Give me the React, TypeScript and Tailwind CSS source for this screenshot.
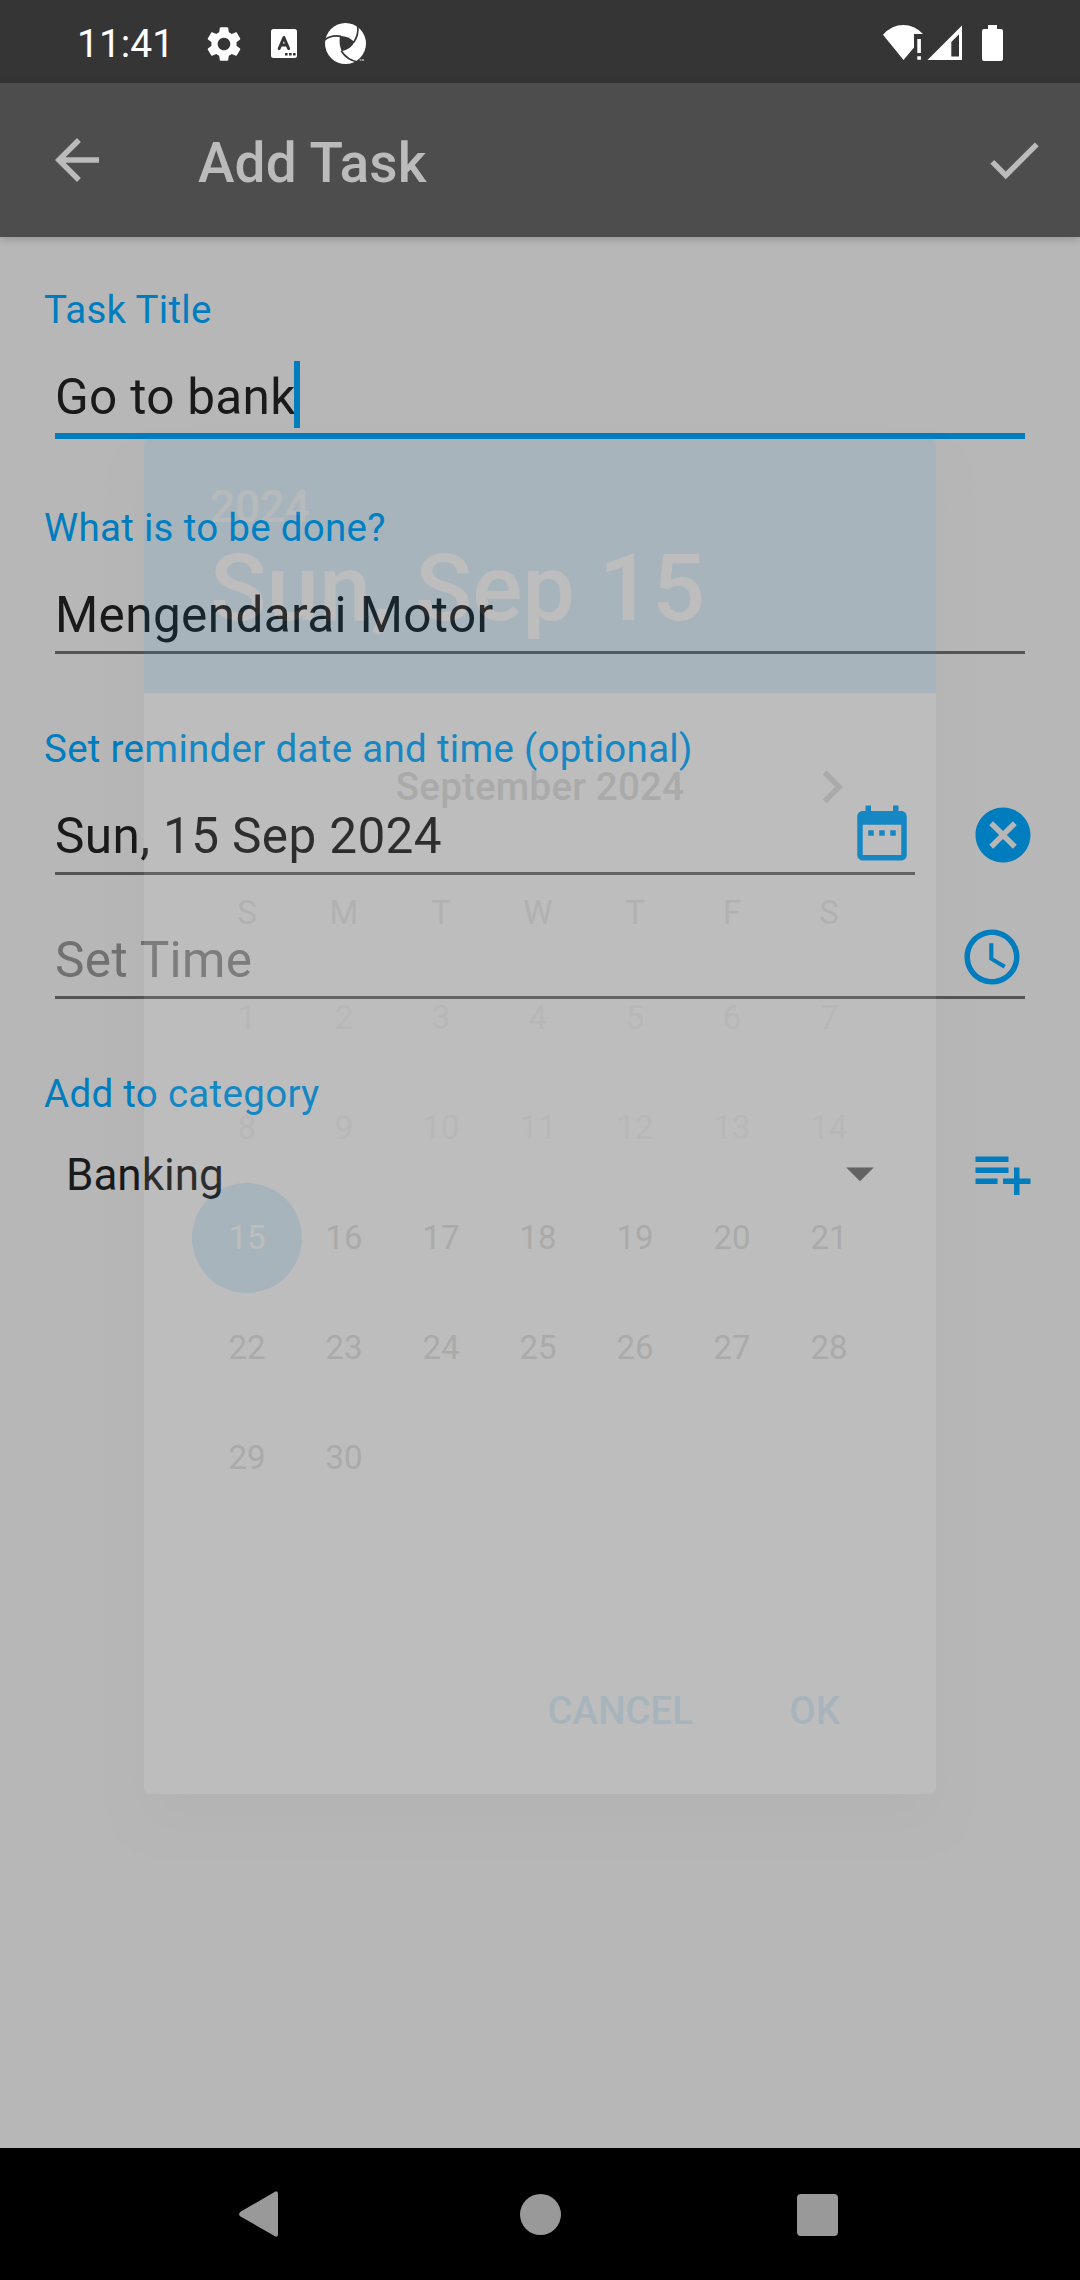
import React from "react";

type IconProps = { d: string; className: string };

function Icon({ d, className }: IconProps) {
  return (
    <svg viewBox="0 0 24 24" className={className} fill="currentColor" aria-hidden="true">
      <path d={d} />
    </svg>
  );
}

const ICONS = {
  gear: "M19.14 12.94c.04-.3.06-.61.06-.94 0-.32-.02-.64-.07-.94l2.03-1.58c.18-.14.23-.41.12-.61l-1.92-3.32c-.12-.22-.37-.29-.59-.22l-2.39.96c-.5-.38-1.03-.7-1.62-.94l-.36-2.54c-.04-.24-.24-.41-.48-.41h-3.84c-.24 0-.43.17-.47.41l-.36 2.54c-.59.24-1.13.57-1.62.94l-2.39-.96c-.22-.08-.47 0-.59.22L2.74 8.87c-.12.21-.08.47.12.61l2.03 1.58c-.05.3-.09.63-.09.94s.02.64.07.94l-2.03 1.58c-.18.14-.23.41-.12.61l1.92 3.32c.12.22.37.29.59.22l2.39-.96c.5.38 1.03.7 1.62.94l.36 2.54c.05.24.24.41.48.41h3.84c.24 0 .44-.17.47-.41l.36-2.54c.59-.24 1.13-.56 1.62-.94l2.39.96c.22.08.47 0 .59-.22l1.92-3.32c.12-.22.07-.47-.12-.61l-2.01-1.58zM12 15.6c-1.98 0-3.6-1.62-3.6-3.6s1.62-3.6 3.6-3.6 3.6 1.62 3.6 3.6-1.62 3.6-3.6 3.6z",
  back: "M20 11H7.83l5.59-5.59L12 4l-8 8 8 8 1.41-1.41L7.83 13H20v-2z",
  done: "M9 16.2L4.8 12l-1.4 1.4L9 19 21 7l-1.4-1.4L9 16.2z",
  calendar:
    "M9 11H7v2h2v-2zm4 0h-2v2h2v-2zm4 0h-2v2h2v-2zm2-7h-1V2h-2v2H8V2H6v2H5c-1.11 0-1.99.9-1.99 2L3 20c0 1.1.89 2 2 2h14c1.1 0 2-.9 2-2V6c0-1.1-.9-2-2-2zm0 16H5V9h14v11z",
  clear:
    "M12 2C6.47 2 2 6.47 2 12s4.47 10 10 10 10-4.47 10-10S17.53 2 12 2zm5 13.59L15.59 17 12 13.41 8.41 17 7 15.59 10.59 12 7 8.41 8.41 7 12 10.59 15.59 7 17 8.41 13.41 12 17 15.59z",
  clock:
    "M11.99 2C6.47 2 2 6.48 2 12s4.47 10 9.99 10C17.52 22 22 17.52 22 12S17.52 2 11.99 2zM12 20c-4.42 0-8-3.58-8-8s3.58-8 8-8 8 3.58 8 8-3.58 8-8 8zm.5-13H11v6l5.25 3.15.75-1.23-4.5-2.67z",
  dropdown: "M7 10l5 5 5-5z",
  playlistAdd: "M14 10H2v2h12v-2zm0-4H2v2h12V6zm4 8v-4h-2v4h-4v2h4v4h2v-4h4v-2h-4zM2 16h8v-2H2v2z",
  chevron: "M10 6L8.59 7.41 13.17 12l-4.58 4.59L10 18l6-6z",
};

function StatusBar() {
  return (
    <header className="flex h-[83px] items-start bg-[#353535] pl-[77px] text-white">
      <span className="mt-[21px] w-[93px] whitespace-nowrap text-[39px] leading-[46px]">11:41</span>
      <Icon d={ICONS.gear} className="ml-[32.5px] mt-[22.5px] h-[42px] w-[42px] shrink-0" />
      <svg viewBox="0 0 26 29" className="ml-[26.5px] mt-[29px] h-[29px] w-[26px] shrink-0" aria-hidden="true">
        <rect width="26" height="29" rx="2.5" fill="#fff" />
        <path d="M8.2 19.5 L12.9 8.5 L17.6 19.5 M9.8 16 H16" fill="none" stroke="#353535" strokeWidth="3" strokeLinejoin="round" strokeLinecap="round" />
        <path d="M14 24h2.6v2.6H14zM18 24h2.6v2.6H18zM22 24h2.6v2.6H22z" fill="#353535" />
      </svg>
      <svg viewBox="0 0 123 123" className="ml-[28px] mt-[23px] h-[41px] w-[41px] shrink-0" aria-hidden="true">
        <circle cx="61.5" cy="61.5" r="61.5" fill="#fff" />
        <path d="M45 39 Q70 38 88 57 Q80 77 50 85 Q41 62 45 39z" fill="#353535" />
        <path d="M-2 52 Q18 34 48 40" fill="none" stroke="#353535" strokeWidth="5" />
        <path d="M98 6 Q102 36 86 58" fill="none" stroke="#353535" strokeWidth="5" />
        <path d="M49 84 Q66 111 98 117" fill="none" stroke="#353535" strokeWidth="5" />
        <path d="M98 123 L104 110 L123 104 V123z" fill="#353535" />
        <path d="M104 109h5v4h-5zM111 109h6v4h-6z" fill="#bbb" />
      </svg>
      <svg viewBox="0 0 120 36" className="ml-auto mr-[77px] mt-[25px] h-[36px] w-[120px] shrink-0" fill="#fff" aria-hidden="true">
        <path d="M0 9.8 Q8.5 0 20.3 0 Q31.500 0 40 9 H31 V22.500 L20.500 35z" />
        <path d="M34.300 14h3.600v14h-3.600zM34.300 31.300h3.600v3.500h-3.600z" />
        <path fillRule="evenodd" d="M79 .5 V35 H44.500z M76 9.200 L68.300 16.900 V31.500 H76z" />
        <path d="M105 0h9v4h4a2 2 0 0 1 2 2v28a2 2 0 0 1-2 2h-17a2 2 0 0 1-2-2V6a2 2 0 0 1 2-2h4z" />
      </svg>
    </header>
  );
}

function AppBar() {
  return (
    <div className="relative z-10 flex h-[154px] items-center bg-[#4d4d4d] text-[#bbbbbb] shadow-[0_2px_9px_rgba(0,0,0,0.2)]">
      <Icon d={ICONS.back} className="ml-[44px] h-[66px] w-[66px]" />
      <h1 className="ml-[88px] mt-[5px] text-[55px] font-medium leading-[64px] tracking-[0.15px]">Add Task</h1>
      <Icon d={ICONS.done} className="ml-auto mr-[33px] h-[66px] w-[66px]" />
    </div>
  );
}

function Label({ className, children }: { className: string; children: React.ReactNode }) {
  return (
    <div className={`ml-[44px] h-[45px] whitespace-nowrap text-[38.5px] leading-[45px] tracking-[0.3px] text-[#007dbf] ${className}`}>
      {children}
    </div>
  );
}

const FIELD =
  "flex h-[68px] items-start whitespace-nowrap border-b-[3px] border-[#555555] text-[49.5px] leading-[58px] tracking-[0.38px]";

function TaskForm() {
  return (
    <main className="flex h-[1911px] flex-col pt-[50px] text-[#1a1a1a]">
      <Label className="">Task Title</Label>
      <div className="mx-[55px] mt-[36px] flex h-[71px] items-start whitespace-nowrap border-b-[6px] border-[#007dbf] text-[49.5px] leading-[58px] tracking-[0.3px]">
        Go to bank
        <span className="-mt-[7px] -ml-[2px] h-[67px] w-[6px] bg-[#007dbf]" />
      </div>

      <Label className="mt-[66px]">What is to be done?</Label>
      <div className={`mx-[55px] mt-[36px] ${FIELD}`}>Mengendarai Motor</div>

      <Label className="mt-[72px]">Set reminder date and time (optional)</Label>
      <div className="mt-[36px] flex items-start pl-[55px]">
        <div className={`w-[860px] ${FIELD}`}>
          Sun, 15 Sep 2024
          <Icon d={ICONS.calendar} className="-mt-[7.500px] ml-auto mr-[0.500px] h-[66px] w-[66px] text-[#007dbf]" />
        </div>
        <Icon d={ICONS.clear} className="-mt-[5px] ml-[55px] h-[66px] w-[66px] text-[#007dbf]" />
      </div>

      <div className={`mx-[55px] mt-[56px] text-[#717171] ${FIELD}`}>
        Set Time
        <Icon d={ICONS.clock} className="-mt-[7px] ml-auto h-[66px] w-[66px] text-[#007dbf]" />
      </div>

      <Label className="mt-[72px]">Add to category</Label>
      <div className="mt-[33px] flex items-start pl-[66px] text-[44px] leading-[52px]">
        <span className="w-[761px]">Banking</span>
        <Icon d={ICONS.dropdown} className="-mt-[9.500px] h-[66px] w-[66px] text-[#555555]" />
        <Icon d={ICONS.playlistAdd} className="-mt-[9.500px] ml-[77px] h-[66px] w-[66px] text-[#007dbf]" />
      </div>
    </main>
  );
}

const WEEKDAYS = ["S", "M", "T", "W", "T", "F", "S"];
const DAYS = Array.from({ length: 30 }, (_, i) => i + 1);
const SELECTED = 15;

/* Date picker caught part-way through its fade animation. */
function DatePicker() {
  return (
    <section className="absolute left-[144px] top-[437px] z-20 flex h-[1357px] w-[792px] flex-col rounded-[6px] bg-white opacity-[0.083] shadow-[0_28px_44px_-4px_rgba(0,0,0,0.24)]">
      <div className="h-[256px] rounded-t-[6px] bg-[#009ef5] pl-[66px] pt-[44px] font-medium text-white">
        <div className="text-[44px] leading-[52px] opacity-70">2024</div>
        <div className="text-[93.5px] leading-[110px] tracking-[0.15px]">Sun, Sep 15</div>
      </div>
      <div className="relative flex h-[187px] justify-center pt-[71px] text-[38.5px] font-medium leading-[45px] tracking-[0.2px] text-[#212121]">
        September 2024
        <Icon d={ICONS.chevron} className="absolute left-[655px] top-[61px] h-[66px] w-[66px]" />
      </div>
      <div className="ml-[54.500px] grid w-[679px] grid-cols-7 text-center text-[33px] leading-[39px] text-[#757575]">
        {WEEKDAYS.map((d, i) => (
          <span key={i} className="h-[83px] pt-[12.500px]">
            {d}
          </span>
        ))}
      </div>
      <div className="ml-[54.500px] grid w-[679px] grid-cols-7 text-[33px] text-[#212121]">
        {DAYS.map((n) => (
          <span key={n} className="flex h-[110px] items-center justify-center">
            <span
              className={
                n === SELECTED
                  ? "flex h-[110px] w-[110px] shrink-0 items-center justify-center rounded-full bg-[#009ef5] text-white"
                  : n < SELECTED
                    ? "text-[#bdbdbd]"
                    : ""
              }
            >
              {n}
            </span>
          </span>
        ))}
      </div>
      <div className="mb-[61px] mr-[96px] mt-auto flex justify-end gap-[96px] text-[38.5px] font-medium leading-[45px] text-[#009ef5]">
        <span>CANCEL</span>
        <span>OK</span>
      </div>
    </section>
  );
}

function NavBar() {
  return (
    <nav className="flex h-[132px] items-center bg-black pl-[239px] text-[#999999]">
      <svg viewBox="0 0 39 46" className="h-[46px] w-[39px]" fill="currentColor" aria-hidden="true">
        <path d="M36 .8 Q39 -.8 39 3 V43 Q39 46.800 36 45.200 L1.500 25.500 Q-1.200 23.200 1.500 20.800z" />
      </svg>
      <span className="ml-[241.500px] h-[41px] w-[41px] rounded-full bg-[#999999]" />
      <span className="ml-[236.500px] mt-[1px] h-[42px] w-[41px] rounded-[4px] bg-[#999999]" />
    </nav>
  );
}

export default function App() {
  return (
    <div className="relative h-[2280px] w-[1080px] overflow-hidden bg-[#b7b7b7] font-['Roboto',sans-serif]">
      <StatusBar />
      <AppBar />
      <TaskForm />
      <DatePicker />
      <NavBar />
    </div>
  );
}
